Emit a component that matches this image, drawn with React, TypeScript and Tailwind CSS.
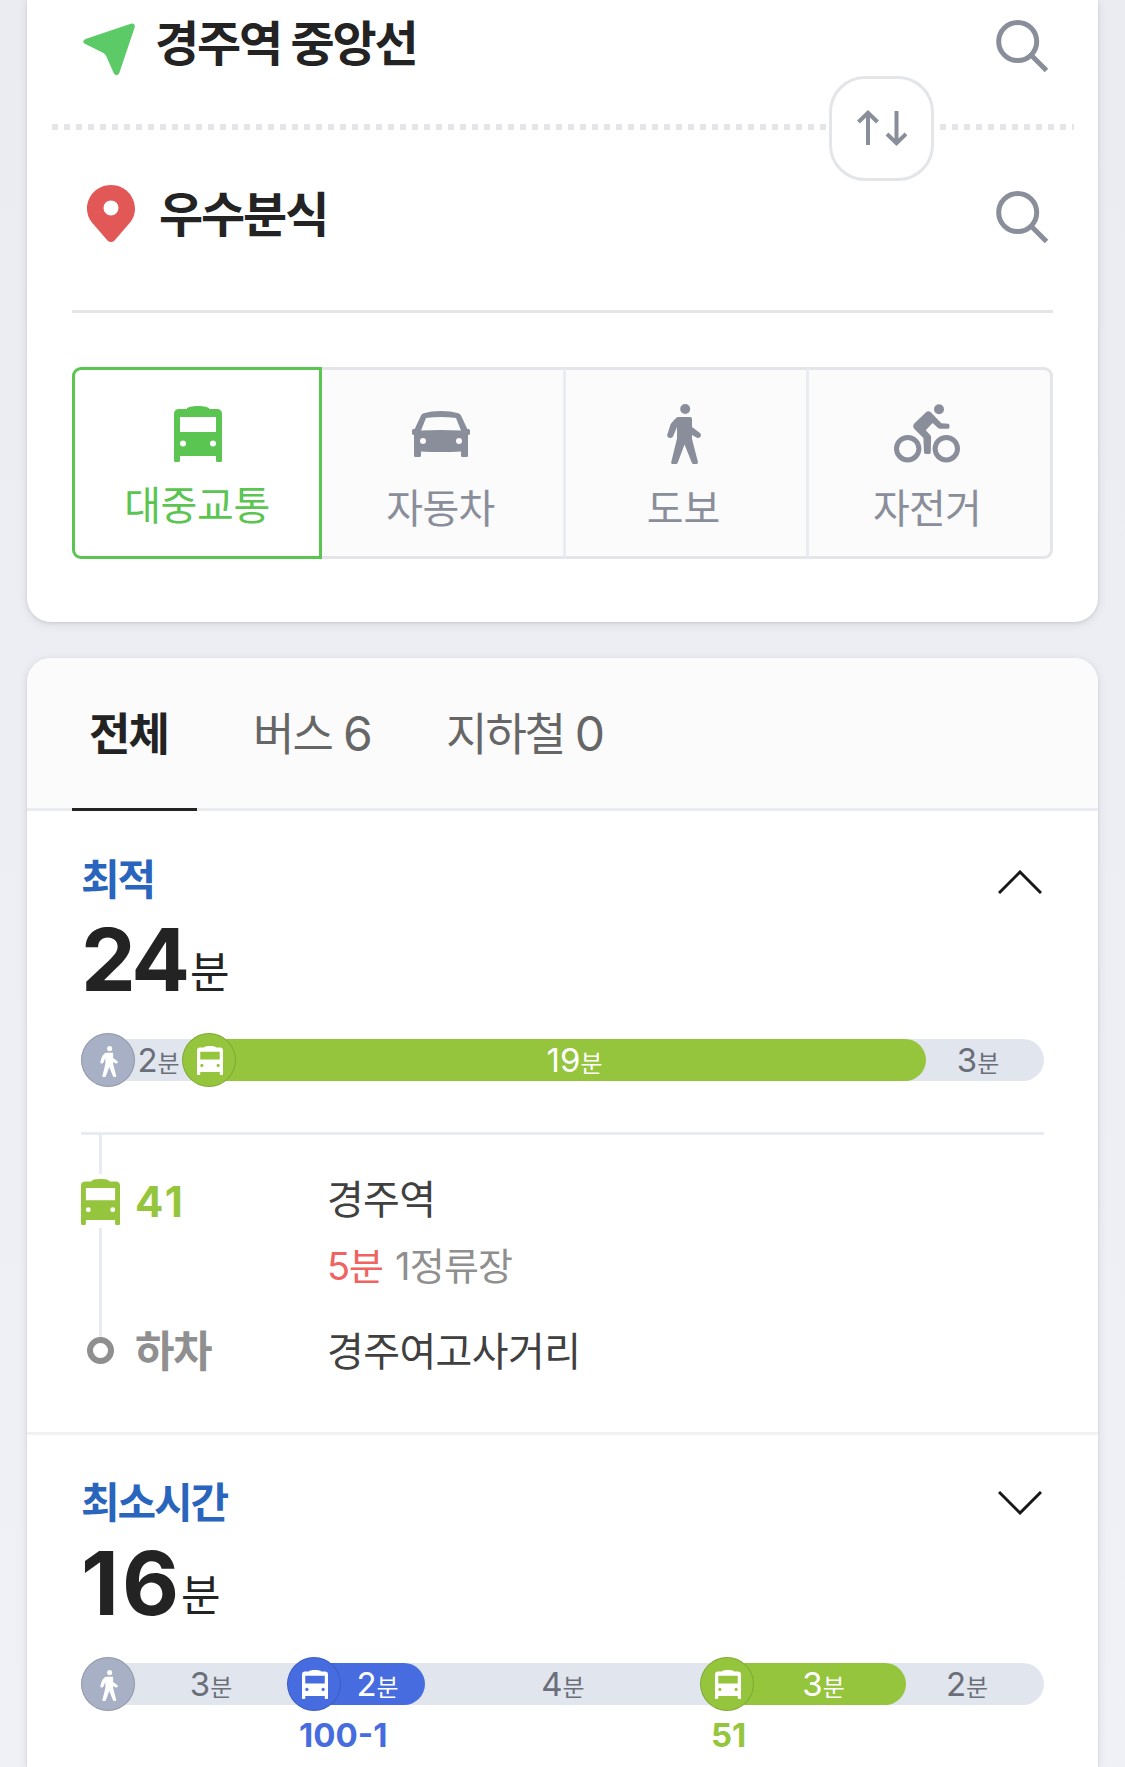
import React from 'react';

function BusIcon({ className }: { className: string }) {
  return (
    <svg viewBox="0 0 48 56" preserveAspectRatio="none" className={className} fill="currentColor" fillRule="evenodd">
      <path d="M4.5 3H12.5C13.3 1 18 0 24 0S34.700 1 35.500 3H43.500Q48 3.500 48 8V54.500Q48 56 46.500 56H43.500Q42 56 42 54.500V50H6V54.500Q6 56 4.500 56H1.500Q0 56 0 54.500V8Q0 3.500 4.500 3ZM6 11V26H42V11ZM9 34.500A3 3 0 1 0 9 40.500A3 3 0 1 0 9 34.500ZM39 34.500A3 3 0 1 0 39 40.500A3 3 0 1 0 39 34.500Z" />
    </svg>
  );
}

function WalkIcon({ className }: { className: string }) {
  return (
    <svg viewBox="0 0 34 60" className={className} fill="currentColor">
      <circle cx="18.200" cy="5" r="5" />
      <path d="M11.200 13H23.300Q25 13.200 25 15V23L33 29Q34.500 30.800 33.600 32.600Q32.300 34.600 30 33.700L25 31V35L31 58.300Q31 60 29.600 60H26.600Q25.300 60 24.700 58.500L17.500 40.500L10.800 58.500Q10.200 60 9 60H5.500Q4 60 4.200 58.300L10 34.500V23L6 32.600Q5 34.400 3 34Q0 33.600 .200 31L3.500 20.500Q4.200 19 8.800 14.200Q10 13 11.200 13Z" />
    </svg>
  );
}

function CarIcon() {
  return (
    <svg viewBox="0 0 58 46" className="h-[46px] w-[58px]" fill="currentColor" fillRule="evenodd">
      <path d="M11.500 2.300Q19 0 29 0T46.500 2.300Q48.400 3 49 4.500L55.300 18H56.500Q58 18 58 19.500V22.500Q58 24 56 24V44.500Q56 46 54.500 46H50.500Q49 46 49 44.500V40.400Q29 41.400 9 40.400V44.500Q9 46 7.500 46H3.500Q2 46 2 44.500V24Q0 24 0 22.500V19.500Q0 18 1.500 18H2.700L9 4.500Q9.600 3 11.500 2.300ZM14 7L9 19.400Q29 18.400 49 19.400L44 7Q29 5.200 14 7ZM11 27A3 3 0 1 0 11 33A3 3 0 1 0 11 27ZM47 27A3 3 0 1 0 47 33A3 3 0 1 0 47 27Z" />
    </svg>
  );
}

function BikeIcon() {
  return (
    <svg viewBox="0 0 66 60" className="h-[60px] w-[66px]" fill="currentColor">
      <circle cx="13.700" cy="44.700" r="11.200" fill="none" stroke="currentColor" strokeWidth="5" />
      <circle cx="52.300" cy="44.700" r="11.200" fill="none" stroke="currentColor" strokeWidth="5" />
      <circle cx="45" cy="5.300" r="5" />
      <path d="M32 8.200Q34.300 6.200 36.800 8.300L47.300 19.300L54 19.700Q55.500 19.900 55.500 21.500V23Q55.500 24.800 54 24.800H46.500Q44.800 24.800 43.800 23.800L38.600 18.900L31.800 26.300L36.200 31Q37.100 32 37.100 33.500L36.800 48.600Q36.800 50 35.300 50H31.500Q30.100 50 30 48.600L29.400 34L20.400 25Q18 22 20.300 19.500Z" />
    </svg>
  );
}

function SearchIcon() {
  return (
    <svg viewBox="0 0 53 53" className="h-[53px] w-[53px] text-[#8a8e9a]" fill="none" stroke="currentColor" strokeWidth="5">
      <circle cx="21.700" cy="21.500" r="19" />
      <path d="M35 35L50.500 50.500" />
    </svg>
  );
}

function Chevron({ up }: { up?: boolean }) {
  return (
    <svg viewBox="0 0 44 24" className={up ? 'mt-[11px] mr-[2px] h-6 w-11' : 'mt-[9px] mr-[2px] h-6 w-11'} fill="none" stroke="#17181a" strokeWidth="3">
      <path d={up ? 'M1 23L22 2L43 23' : 'M1 1L22 22L43 1'} />
    </svg>
  );
}

function Minutes({ value, className }: { value: string; className?: string }) {
  return (
    <span className={`flex items-center justify-center text-[33px] leading-none ${className ?? ''}`}>
      <span>
        {value}
        <span className="text-[24px]">분</span>
      </span>
    </span>
  );
}

function Dot({ className, children }: { className: string; children: React.ReactNode }) {
  return (
    <span className={`z-10 flex h-[54px] w-[54px] shrink-0 items-center justify-center rounded-full border border-black/15 pl-px text-white ${className}`}>
      {children}
    </span>
  );
}

function WalkDot() {
  return (
    <Dot className="bg-[#a7b0c4]">
      <WalkIcon className="mt-0.5 h-[31px] w-[18px]" />
    </Dot>
  );
}

function BusDot({ className }: { className: string }) {
  return (
    <Dot className={className}>
      <BusIcon className="mt-px h-[29px] w-[26px]" />
    </Dot>
  );
}

function Summary({ label, value, up, valueClass }: { label: string; value: string; up?: boolean; valueClass: string }) {
  return (
    <>
      <div className="flex h-[42px] justify-between">
        <h2 className="text-[42px] leading-none font-bold tracking-[-2.1px] text-[#2964bd]">{label}</h2>
        <Chevron up={up} />
      </div>
      <div className="mt-[15px] flex h-[87px] text-[#232323]">
        <strong className={`leading-none font-bold ${valueClass}`}>{value}</strong>
        <span className="mt-[35px] text-[43px] leading-none">분</span>
      </div>
    </>
  );
}

export default function App() {
  return (
    <main className="flex h-[1767px] w-[1125px] flex-col gap-9 overflow-hidden bg-linear-to-b from-[#ebecf1] to-[#f0f1f6] px-[27px] font-[Inter,'Noto_Sans_CJK_KR',sans-serif]">
      <section className="h-[622px] shrink-0 rounded-b-3xl bg-white shadow-[0_1px_3px_rgba(0,0,0,0.08),0_2px_10px_rgba(0,0,0,0.1)]">
        <div className="flex h-[124px] items-start pr-[49px] pl-14">
          <svg viewBox="0 0 52 52" className="mt-[23px] h-[52px] w-[52px] text-[#5dca68]" fill="currentColor">
            <path d="M2.500 16L48.500 .500Q52.200 .200 51.700 4.200L36.200 50.200Q33.500 54 30.800 50.200L23.300 33.200Q22.300 31 20 29.700L1.300 20.600Q-1.300 18 2.500 16Z" />
          </svg>
          <h1 className="mt-5 ml-5 grow text-[48px] leading-none font-bold tracking-[-2.1px] text-[#232323]">경주역 중앙선</h1>
          <div className="mt-5"><SearchIcon /></div>
        </div>

        <div className="ml-[25px] flex h-[6px] items-center">
          <span className="h-[6px] w-[777px] shrink-0 bg-[repeating-linear-gradient(90deg,#e3e5e8_0_6px,transparent_6px_12px)]" />
          <button className="mt-[2px] flex h-[105px] w-[105px] shrink-0 items-center justify-center rounded-[36px] border-[3px] border-[#e3e5e8] bg-white">
            <svg viewBox="0 0 50 36" className="h-9 w-[50px]" fill="none" stroke="#8a8e9a" strokeWidth="4">
              <path d="M11 35V3M1.500 12L11 2.800L20.500 12M39.500 1V33M30 24L39.500 33.200L49 24" />
            </svg>
          </button>
          <span className="ml-[6px] h-[6px] w-[134px] shrink-0 bg-[repeating-linear-gradient(90deg,#e3e5e8_0_6px,transparent_6px_12px)]" />
        </div>

        <div className="mx-[45px] flex h-[183px] items-start border-b-[3px] border-[#e3e5e8] pr-[4px] pl-[15px]">
          <svg viewBox="0 0 48 57" className="mt-[55px] h-[57px] w-12" fill="#e25856" fillRule="evenodd">
            <path d="M24 0C38 0 48 11 48 24Q48 31 43.500 37L27.500 55.500Q24 58.500 20.500 55.500L4.500 37Q0 31 0 24C0 11 10 0 24 0ZM24 15.400A7.500 7.500 0 1 0 24 30.400A7.500 7.500 0 1 0 24 15.400Z" />
          </svg>
          <h1 className="mt-[61px] ml-6 grow text-[48px] leading-none font-bold tracking-[-2.1px] text-[#232323]">우수분식</h1>
          <div className="mt-[61px]"><SearchIcon /></div>
        </div>

        <nav className="mx-[45px] mt-[54px] flex h-48 text-[40px] leading-none text-[#8a8e9a]">
          <div className="flex w-[250px] flex-col items-center rounded-l-[9px] border-[3px] border-[#5ac551] text-[#5ac551]">
            <BusIcon className="mt-9 ml-px h-14 w-12" />
            <span className="mt-[24px] tracking-[-0.4px]">대중교통</span>
          </div>
          <div className="flex w-[244px] flex-col items-center border-y-[3px] border-r-[3px] border-y-[#e3e5e8] border-r-[#e9ecf0] bg-[#fbfbfc] pr-[4px]">
            <span className="mt-[34px] flex h-[60px] items-center"><CarIcon /></span>
            <span className="mt-[25px] tracking-[-0.6px]">자동차</span>
          </div>
          <div className="flex w-[243px] flex-col items-center border-y-[3px] border-r-[3px] border-y-[#e3e5e8] border-r-[#e9ecf0] bg-[#fbfbfc] pr-[5px]">
            <WalkIcon className="mt-[34px] h-[60px] w-[34px]" />
            <span className="mt-[25px]">도보</span>
          </div>
          <div className="flex w-[244px] flex-col items-center rounded-r-[9px] border-y-[3px] border-r-[3px] border-[#e3e5e8] bg-[#fbfbfc] pr-[5px]">
            <span className="mt-[34px]"><BikeIcon /></span>
            <span className="mt-[25px] tracking-[-0.8px]">자전거</span>
          </div>
        </nav>
      </section>

      <section className="grow rounded-t-3xl bg-white shadow-[0_1px_3px_rgba(0,0,0,0.08),0_2px_10px_rgba(0,0,0,0.1)]">
        <nav className="flex h-[153px] rounded-t-3xl border-b-[3px] border-[#e9edf1] bg-[#fbfbfc] pl-[45px] text-[45px] leading-none text-[#666]">
          <div className="h-[153px] w-[125px] border-b-[3px] border-[#232323] pt-[54px] pl-[17px] font-bold tracking-[-2px] text-[#232323]">전체</div>
          <div className="ml-[56px] w-[193px] pt-[54px] tracking-[-1.8px]">버스 <span className="text-[48px] leading-[0]">6</span></div>
          <div className="pt-[54px] tracking-[-2px]">지하철 <span className="text-[48px] leading-[0]">0</span></div>
        </nav>

        <article className="border-b-[3px] border-[#f2f2f2] px-[54px] pt-12">
          <Summary label="최적" value="24" up valueClass="w-[109px] text-[87px] tracking-[-3.2px]" />
          <div className="mt-9 mb-[51px] flex h-[42px] items-center rounded-full bg-[#e1e6ee] text-[#6b6f79]">
            <WalkDot />
            <Minutes value="2" className="w-[47px]" />
            <BusDot className="bg-[#95c53d]" />
            <Minutes value="19" className="-ml-[27px] h-[42px] w-[717px] rounded-r-full bg-[#95c53d] pl-3.5 text-white" />
            <Minutes value="3" className="w-[118px] pr-3.5" />
          </div>
          <div className="flex h-[300px] border-t-[3px] border-[#e8ebf1]">
            <div className="flex w-[39px] flex-col items-center">
              <span className="h-[39px] w-[3px] bg-[#e8ebf1]" />
              <BusIcon className="mt-[5px] mb-[3px] h-[46px] w-[39px] text-[#95c53d]" />
              <span className="h-[109px] w-[3px] bg-[#e8ebf1]" />
              <span className="h-[27px] w-[27px] rounded-full border-[6px] border-[#8f8f8f]" />
            </div>
            <div className="flex w-[207px] flex-col pl-[15px] leading-none font-bold">
              <span className="mt-[46px] text-[42px] tracking-[3px] text-[#95c53d]">41</span>
              <span className="mt-[107px] text-[43px] tracking-[-1.5px] text-[#8f8f8f]">하차</span>
            </div>
            <div className="flex flex-col text-[40px] leading-none text-[#404040]">
              <span className="mt-[45px] tracking-[-0.7px]">경주역</span>
              <span className="mt-[27px] flex gap-[12px] text-[38px] text-[#8f8f8f]">
                <span className="tracking-[-1px] text-[#f06360]">5분</span>
                <span className="tracking-[-0.8px]">1정류장</span>
              </span>
              <span className="mt-[47px] tracking-[-0.6px]">경주여고사거리</span>
            </div>
          </div>
        </article>

        <article className="px-[54px] pt-[47px]">
          <Summary label="최소시간" value="16" valueClass="w-[100px] text-[88px] tracking-[3px]" />
          <div className="mt-[37px] flex h-[42px] items-center rounded-full bg-[#e1e6ee] text-[#6b6f79]">
            <WalkDot />
            <Minutes value="3" className="w-[152px]" />
            <BusDot className="bg-[#466ce0]" />
            <Minutes value="2" className="-ml-[27px] h-[42px] w-[111px] rounded-r-full bg-[#466ce0] pl-4 text-white" />
            <Minutes value="4" className="w-[275px] pl-px" />
            <BusDot className="bg-[#95c53d]" />
            <Minutes value="3" className="-ml-[27px] h-[42px] w-[179px] rounded-r-full bg-[#95c53d] pl-3.5 text-white" />
            <Minutes value="2" className="w-[138px] pr-4" />
          </div>
          <div className="mt-[14px] flex pl-[218px] text-[33px] leading-none font-bold">
            <span className="w-[412px] text-[#466ce0]">100-1</span>
            <span className="text-[#95c53d]">51</span>
          </div>
        </article>
      </section>
    </main>
  );
}
